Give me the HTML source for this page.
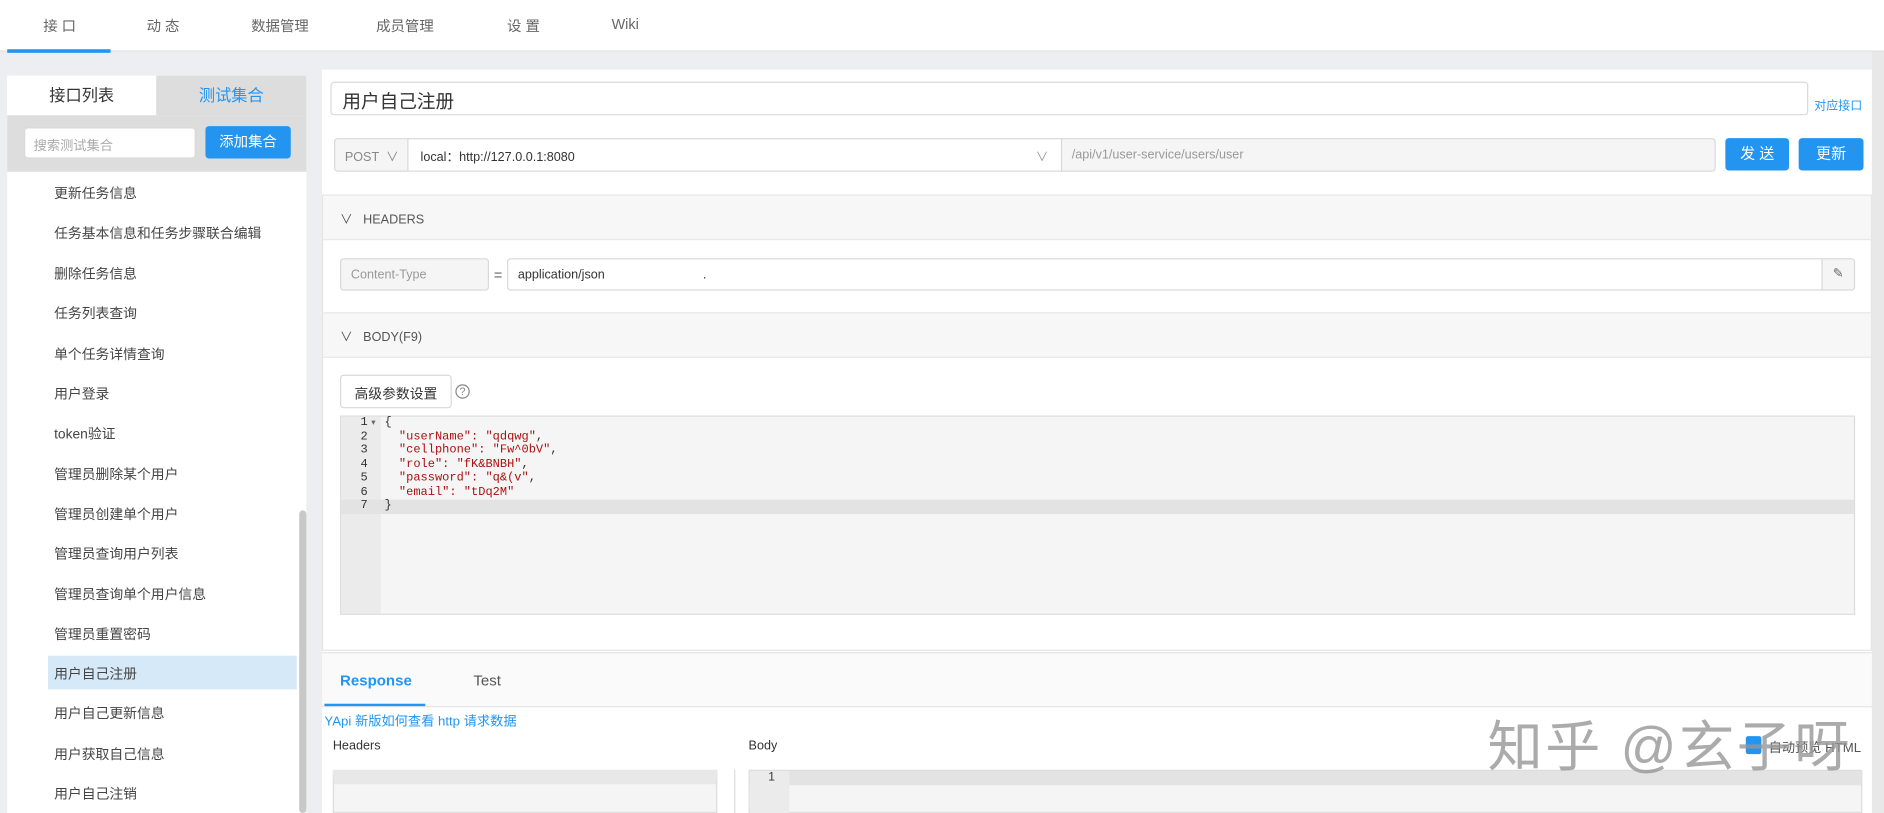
<!DOCTYPE html>
<html><head><meta charset="utf-8"><style>
*{box-sizing:border-box;margin:0;padding:0;white-space:nowrap}
body{width:1884px;height:813px;overflow:hidden;background:#eef0f3;font-family:"Liberation Sans","Noto Sans CJK SC",sans-serif;color:#333}
#w{width:1568px;height:677px;transform:scale(1.2015,1.2009);transform-origin:0 0;position:relative;background:#eceef1}
.a{position:absolute}
.nav{left:0;top:0;width:1568px;height:43px;background:#fff;border-bottom:1px solid #e0e0e0}
.nav span{position:absolute;top:13px;font-size:12px;color:#666}
.li{position:absolute;left:45px;font-size:11.5px;color:#444}
.inp{position:absolute;border:1px solid #d9d9d9;border-radius:3px;background:#fff;font-size:12px;overflow:hidden}
.btn{position:absolute;background:#2395f1;color:#fff;border-radius:3px;font-size:12.5px;text-align:center}
pre,pre *{font-family:"Liberation Mono",monospace;font-size:10px;line-height:11.5px;white-space:pre}
</style></head><body><div id="w">
<div class="a nav">
<span style="left:36px">接 口</span><span style="left:122px">动 态</span><span style="left:209px">数据管理</span><span style="left:313px">成员管理</span><span style="left:422px">设 置</span><span style="left:509px">Wiki</span>
<div class="a" style="left:6px;top:41px;width:86px;height:3px;background:#2395f1"></div>
</div>
<div class="a" style="left:6px;top:63px;width:249px;height:614px;background:#fff"></div>
<div class="a" style="left:6px;top:63px;width:124px;height:33px;background:#fff;font-size:13.5px;text-align:center;line-height:33px">接口列表</div>
<div class="a" style="left:130px;top:63px;width:125px;height:33px;background:#ddd;color:#2395f1;font-size:13.5px;text-align:center;line-height:33px">测试集合</div>
<div class="a" style="left:6px;top:96px;width:249px;height:47px;background:#ddd"></div>
<div class="inp" style="left:20px;top:106px;width:143px;height:26px;color:#aaa;padding:6px 7px;font-size:11px">搜索测试集合</div>
<div class="btn" style="left:171px;top:105px;width:71px;height:27px;line-height:27px;font-size:12px">添加集合</div>
<div class="a" style="left:40px;top:546px;width:207px;height:28px;background:#d6e9f8"></div>
<div class="li" style="top:153px">更新任务信息</div>
<div class="li" style="top:186px">任务基本信息和任务步骤联合编辑</div>
<div class="li" style="top:220px">删除任务信息</div>
<div class="li" style="top:253px">任务列表查询</div>
<div class="li" style="top:287px">单个任务详情查询</div>
<div class="li" style="top:320px">用户登录</div>
<div class="li" style="top:353px">token验证</div>
<div class="li" style="top:387px">管理员删除某个用户</div>
<div class="li" style="top:420px">管理员创建单个用户</div>
<div class="li" style="top:453px">管理员查询用户列表</div>
<div class="li" style="top:487px">管理员查询单个用户信息</div>
<div class="li" style="top:520px">管理员重置密码</div>
<div class="li" style="top:553px">用户自己注册</div>
<div class="li" style="top:586px">用户自己更新信息</div>
<div class="li" style="top:620px">用户获取自己信息</div>
<div class="li" style="top:653px">用户自己注销</div>
<div class="a" style="left:249px;top:425px;width:6px;height:252px;background:#c8c8c8;border-radius:3px"></div>
<div class="a" style="left:268px;top:58px;width:1290px;height:619px;background:#fff"></div>
<div class="inp" style="left:275px;top:68px;width:1230px;height:28px;font-size:15.5px;padding:4px 9px;color:#333">用户自己注册</div>
<div class="a" style="left:1510px;top:79px;font-size:10px;color:#2395f1">对应接口</div>
<div class="inp" style="left:278px;top:115px;width:62px;height:28px;background:#f5f5f5;color:#888;font-size:10.5px;padding:7px 8px;border-radius:3px 0 0 3px">POST &nbsp;∨</div>
<div class="inp" style="left:339px;top:115px;width:545px;height:28px;padding:7px 10px;font-size:10.5px;border-radius:0">local：http://127.0.0.1:8080<span style="position:absolute;left:522px;color:#999">∨</span></div>
<div class="inp" style="left:883px;top:115px;width:545px;height:28px;background:#f5f5f5;padding:7px 8px;color:#999;font-size:10.5px;border-radius:0 3px 3px 0">/api/v1/user-service/users/user</div>
<div class="btn" style="left:1436px;top:115px;width:53px;height:27px;line-height:27px">发 送</div>
<div class="btn" style="left:1497px;top:115px;width:54px;height:27px;line-height:27px">更新</div>
<div class="a" style="left:268px;top:162px;width:1290px;height:380px;border:1px solid #e4e4e4"></div>
<div class="a" style="left:269px;top:163px;width:1288px;height:37px;background:#f7f7f7;border-bottom:1px solid #e8e8e8;font-size:10.5px;color:#555;padding:12px 14px">∨&nbsp;&nbsp;&nbsp;HEADERS</div>
<div class="inp" style="left:283px;top:215px;width:124px;height:27px;background:#f5f5f5;color:#999;font-size:10.5px;padding:7px 8px">Content-Type</div>
<div class="a" style="left:411px;top:222px;font-size:12px;color:#666">=</div>
<div class="inp" style="left:422px;top:215px;width:1095px;height:27px;font-size:10.5px;padding:7px 8px;border-radius:3px 0 0 3px">application/json<span style="position:absolute;left:162px">.</span></div>
<div class="inp" style="left:1516px;top:215px;width:28px;height:27px;background:#f5f5f5;text-align:center;font-size:11px;color:#666;padding-top:5px;border-radius:0 3px 3px 0">✎</div>
<div class="a" style="left:269px;top:260px;width:1288px;height:38px;background:#f7f7f7;border-top:1px solid #e8e8e8;border-bottom:1px solid #e8e8e8;font-size:10.5px;color:#555;padding:12px 14px">∨&nbsp;&nbsp;&nbsp;BODY(F9)</div>
<div class="inp" style="left:283px;top:312px;width:93px;height:28px;font-size:11.5px;padding:7px 0;text-align:center">高级参数设置</div>
<div class="a" style="left:379px;top:320px;width:12px;height:12px;border:1px solid #888;border-radius:50%;font-size:9px;text-align:center;line-height:10px;color:#888">?</div>
<div class="a" style="left:283px;top:346px;width:1261px;height:166px;background:#f5f5f5;border:1px solid #ddd"></div>
<div class="a" style="left:284px;top:347px;width:33px;height:164px;background:#ebebeb"></div>
<div class="a" style="left:284px;top:416px;width:1259px;height:12px;background:#e3e3e3"></div>
<pre class="a" style="left:300px;top:347px;color:#333">1
2
3
4
5
6
7</pre>
<div class="a" style="left:309px;top:348px;font-size:7px;color:#666">▾</div>
<pre class="a" style="left:320px;top:347px;color:#333">{
  <span style="color:#a11">"userName": "qdqwg"</span>,
  <span style="color:#a11">"cellphone": "Fw^0bV"</span>,
  <span style="color:#a11">"role": "fK&amp;BNBH"</span>,
  <span style="color:#a11">"password": "q&amp;(v"</span>,
  <span style="color:#a11">"email": "tDq2M"</span>
}</pre>
<div class="a" style="left:268px;top:543px;width:1290px;height:46px;background:#fafafa;border-top:1px solid #e4e4e4;border-bottom:1px solid #e4e4e4"></div>
<div class="a" style="left:283px;top:560px;font-size:12.5px;color:#2395f1;font-weight:bold">Response</div>
<div class="a" style="left:394px;top:560px;font-size:12.5px;color:#555">Test</div>
<div class="a" style="left:270px;top:586px;width:84px;height:2px;background:#2395f1"></div>
<div class="a" style="left:270px;top:592px;font-size:11px;color:#2395f1">YApi 新版如何查看 http 请求数据</div>
<div class="a" style="left:277px;top:615px;font-size:10.5px">Headers</div>
<div class="a" style="left:623px;top:615px;font-size:10.5px">Body</div>
<div class="a" style="left:277px;top:641px;width:320px;height:36px;background:#f5f5f5;border:1px solid #ddd;border-top:12px solid #e8e8e8"></div>
<div class="a" style="left:611px;top:641px;width:1px;height:36px;background:#ddd"></div>
<div class="a" style="left:623px;top:641px;width:927px;height:36px;background:#f5f5f5;border:1px solid #ddd"></div>
<div class="a" style="left:624px;top:642px;width:925px;height:12px;background:#e3e3e3"></div>
<div class="a" style="left:624px;top:642px;width:33px;height:35px;background:#ebebeb;font-size:10px;text-align:right;padding-right:12px">1</div>
<div class="a" style="left:1453px;top:613px;width:13px;height:15px;background:#2395f1;border-radius:2px"></div>
<div class="a" style="left:1472px;top:614px;font-size:11px;color:#555">自动预览 HTML</div>
<div class="a" style="left:1238px;top:586px;font-size:46px;color:rgba(150,150,150,.8);letter-spacing:2px">知乎 @玄子呀</div>
<div class="a" style="left:1558px;top:43px;width:10px;height:634px;background:#e8e8e8"></div>
</div></body></html>
